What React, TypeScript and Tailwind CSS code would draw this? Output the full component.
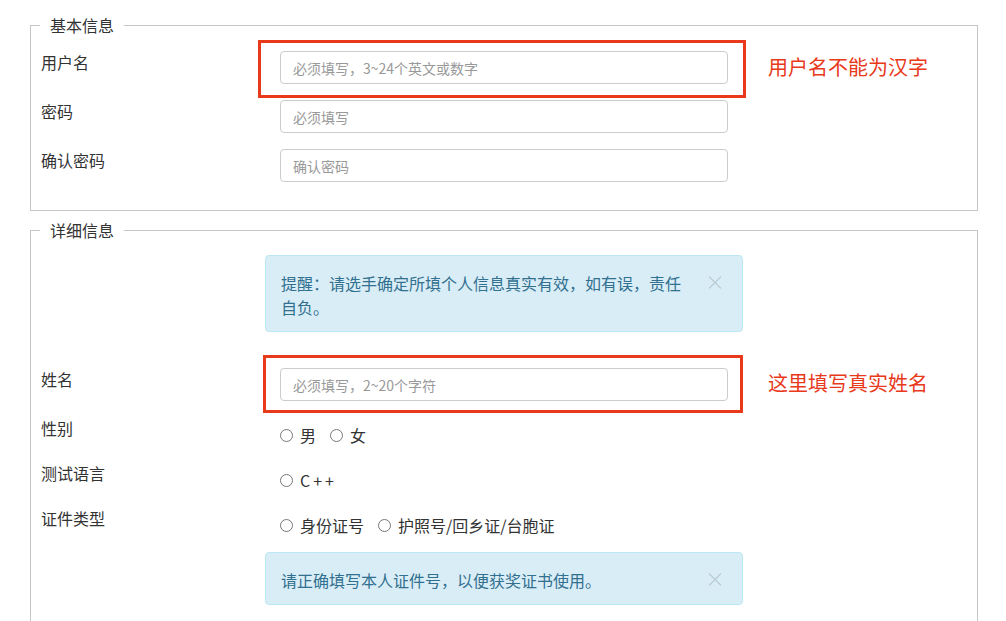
import React from 'react'

const labelCls = 'w-[225px] shrink-0 pl-px text-[16px] leading-[22px] text-[#333]'

const inputCls =
  'mx-[15px] block h-[33px] w-[448px] rounded-[4px] border border-[#ccc] bg-white px-[12px] text-[14px] text-[#555] outline-none placeholder:text-[#999]'

const Radio: React.FC<{ label: string; name: string; wide?: boolean }> = ({ label, name, wide }) => (
  <label
    className={`mr-[14px] flex items-center gap-[7px] text-[16px] leading-[22px] text-[#333] ${
      wide ? 'tracking-[3px]' : ''
    }`}
  >
    <input
      type="radio"
      name={name}
      className="h-[13px] w-[13px] appearance-none rounded-full border border-[#777] bg-white"
    />
    {label}
  </label>
)

const Alert: React.FC<{ children: React.ReactNode }> = ({ children }) => (
  <div className="relative w-[478px] rounded-[4px] border border-[#bce8f1] bg-[#d9edf7] pb-[12px] pl-[15px] pr-[50px] pt-[15px] text-[16px] leading-[24px] text-[#31708f]">
    {children}
    <span className="absolute right-[17px] top-[14px] text-[20px] font-normal leading-[24px] text-black/15">
      ×
    </span>
  </div>
)

export default function App() {
  return (
    <div className="h-[621px] w-full overflow-hidden bg-white pt-[14px] font-['Noto_Sans_CJK_SC',sans-serif]">
      {/* 基本信息 */}
      <fieldset className="ml-[30px] w-[948px] border border-[#c6c6c6] pb-[28px] pl-[9px] pt-[15px]">
        <legend className="px-[10px] text-[16px] leading-[22px] text-[#333]">基本信息</legend>

        <div className="relative mb-[16px] flex">
          <div className={labelCls}>用户名</div>
          <div className="relative w-[478px]">
            <input className={inputCls} placeholder="必须填写，3~24个英文或数字" />
            {/* annotation */}
            <div className="absolute left-[-7px] top-[-11px] h-[58px] w-[488px] border-[3px] border-[#e8391b]" />
            <div className="absolute left-[503px] top-[2px] whitespace-nowrap text-[20px] leading-[28px] text-[#e8391b]">
              用户名不能为汉字
            </div>
          </div>
        </div>

        <div className="mb-[16px] flex">
          <div className={labelCls}>密码</div>
          <div className="w-[478px]">
            <input type="password" className={inputCls} placeholder="必须填写" />
          </div>
        </div>

        <div className="flex">
          <div className={labelCls}>确认密码</div>
          <div className="w-[478px]">
            <input type="password" className={inputCls} placeholder="确认密码" />
          </div>
        </div>
      </fieldset>

      {/* 详细信息 */}
      <fieldset className="ml-[30px] mt-[8px] w-[948px] border border-[#c6c6c6] pb-[30px] pl-[9px] pt-[14px]">
        <legend className="px-[10px] text-[16px] leading-[22px] text-[#333]">详细信息</legend>

        <div className="mb-[36px] flex">
          <div className="w-[225px] shrink-0" />
          <Alert>提醒：请选手确定所填个人信息真实有效，如有误，责任自负。</Alert>
        </div>

        <div className="mb-[16px] flex">
          <div className={labelCls}>姓名</div>
          <div className="relative w-[478px]">
            <input className={inputCls} placeholder="必须填写，2~20个字符" />
            <div className="absolute left-[-2px] top-[-13px] h-[58px] w-[480px] border-[3px] border-[#e8391b]" />
            <div className="absolute left-[503px] top-[1px] whitespace-nowrap text-[20px] leading-[28px] text-[#e8391b]">
              这里填写真实姓名
            </div>
          </div>
        </div>

        <div className="mb-[16px] flex">
          <div className={labelCls}>性别</div>
          <div className="flex w-[478px] pl-[15px] pt-[7px]">
            <Radio name="sex" label="男" />
            <Radio name="sex" label="女" />
          </div>
        </div>

        <div className="mb-[16px] flex">
          <div className={labelCls}>测试语言</div>
          <div className="flex w-[478px] pl-[15px] pt-[7px]">
            <Radio name="lang" label="C++" wide />
          </div>
        </div>

        <div className="mb-[16px] flex">
          <div className={labelCls}>证件类型</div>
          <div className="flex w-[478px] pl-[15px] pt-[7px]">
            <Radio name="idtype" label="身份证号" />
            <Radio name="idtype" label="护照号/回乡证/台胞证" />
          </div>
        </div>

        <div className="flex">
          <div className="w-[225px] shrink-0" />
          <Alert>请正确填写本人证件号，以便获奖证书使用。</Alert>
        </div>
      </fieldset>
    </div>
  )
}
